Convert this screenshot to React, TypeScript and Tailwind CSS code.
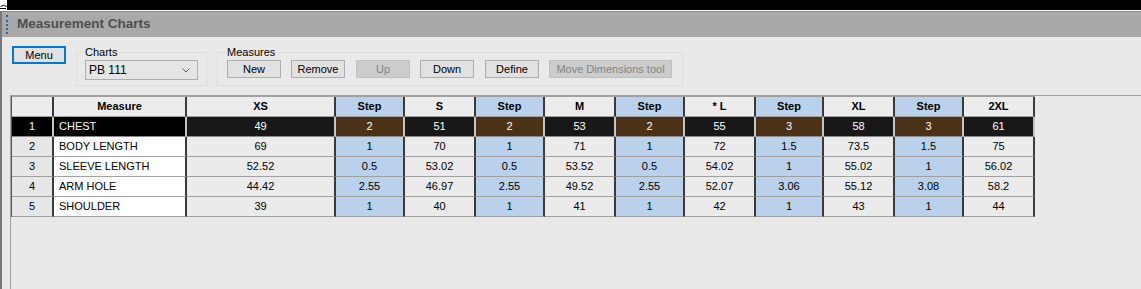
import React from "react";

type Col = { label: string; w: string; step?: boolean };

const cols: Col[] = [
  { label: "", w: "w-[42px]" },
  { label: "Measure", w: "w-[133px]" },
  { label: "XS", w: "w-[149px]" },
  { label: "Step", w: "w-[69px]", step: true },
  { label: "S", w: "w-[71px]" },
  { label: "Step", w: "w-[69px]", step: true },
  { label: "M", w: "w-[71px]" },
  { label: "Step", w: "w-[69px]", step: true },
  { label: "* L", w: "w-[71px]" },
  { label: "Step", w: "w-[68px]", step: true },
  { label: "XL", w: "w-[71px]" },
  { label: "Step", w: "w-[69px]", step: true },
  { label: "2XL", w: "w-[71px]" },
];

const rows: string[][] = [
  ["1", "CHEST", "49", "2", "51", "2", "53", "2", "55", "3", "58", "3", "61"],
  ["2", "BODY LENGTH", "69", "1", "70", "1", "71", "1", "72", "1.5", "73.5", "1.5", "75"],
  ["3", "SLEEVE LENGTH", "52.52", "0.5", "53.02", "0.5", "53.52", "0.5", "54.02", "1", "55.02", "1", "56.02"],
  ["4", "ARM HOLE", "44.42", "2.55", "46.97", "2.55", "49.52", "2.55", "52.07", "3.06", "55.12", "3.08", "58.2"],
  ["5", "SHOULDER", "39", "1", "40", "1", "41", "1", "42", "1", "43", "1", "44"],
];

const Button = ({ label, w = "w-[54px]", disabled = false, cls = "" }: { label: string; w?: string; disabled?: boolean; cls?: string }) => (
  <div
    className={`${w} ${cls} h-[18px] flex items-center justify-center border ${
      disabled ? "bg-[#cccccc] border-[#bfbfbf] text-[#838383]" : "bg-[#e1e1e1] border-[#adadad] text-black"
    }`}
  >
    {label}
  </div>
);

const Cell = ({ col, text, rowIdx, colIdx }: { col: Col; text: string; rowIdx: number; colIdx: number }) => {
  const sel = rowIdx === 0;
  let bg = "bg-[#ebebeb] text-black";
  if (sel) {
    if (colIdx < 2) bg = "bg-black text-white";
    else if (col.step) bg = "bg-[#4a3117] text-white";
    else bg = "bg-[#181818] text-white";
  } else if (colIdx === 1) bg = "bg-white text-black";
  else if (col.step) bg = "bg-[#b9d1ea] text-black";
  else if (colIdx === 0) bg = "bg-[#e6e6e6] text-black";
  return (
    <div
      className={`${col.w} ${bg} h-[20px] flex items-center border-b border-r-2 ${
        sel ? "border-r-[#c4c4c4] border-b-[#8a8a8a]" : "border-r-[#3a3a3a] border-b-[#a0a0a0]"
      } ${colIdx === 1 ? "justify-start pl-[5px]" : "justify-center"}`}
    >
      {text}
    </div>
  );
};

export default function App() {
  return (
    <div className="w-[1141px] h-[289px] overflow-hidden bg-[#e9e9e9] font-['Liberation_Sans',Arial,sans-serif] text-[11px] text-black">
      <div className="h-[10px] bg-black flex">
        <svg width="8" height="10" viewBox="0 0 8 10">
          <rect x="0" y="0" width="7" height="10" fill="#fff" />
          <path d="M0.5 6.5 Q3.5 4 6.5 6.5" stroke="#000" strokeWidth="1" fill="none" />
          <rect x="0" y="8" width="6" height="1" fill="#000" />
        </svg>
      </div>
      <div className="h-px bg-white" />
      <div className="flex flex-col h-[278px] border-l-2 border-l-[#7a7a7a]">
        <div className="h-[26px] bg-[#a9a9a9] flex items-center border-t border-t-[#8c8c8c]">
          <div className="ml-[4px] h-[19px] w-[2px] border-l-2 border-dotted border-l-[#2c5fb3]" />
          <span className="ml-[9px] text-[13.5px] font-bold text-[#4f4f4f]">Measurement Charts</span>
        </div>
        <div className="flex items-start gap-[10px] pl-[10px] pt-[9px]">
          <div className="w-[54px] h-[18px] flex items-center justify-center border-2 border-[#0078d7] bg-[#e1e1e1]">Menu</div>
          <fieldset className="border border-[#dcdcdc] pl-[8px] pr-[8px] pb-[5px] pt-[1px] w-[131px]">
            <legend className="px-0 leading-[13px]">Charts</legend>
            <div className="w-[113px] h-[20px] bg-[#e5e5e5] border border-[#adadad] flex items-center justify-between pl-[3px] pr-[7px]">
              <span className="text-[12px]">PB 111</span>
              <svg width="8" height="5" viewBox="0 0 8 5">
                <polyline points="0.5,0.5 4,4 7.5,0.5" fill="none" stroke="#606060" strokeWidth="1" />
              </svg>
            </div>
          </fieldset>
          <fieldset className="border border-[#dcdcdc] pl-[9px] pr-[9px] pb-[7px] pt-[1px] w-[466px]">
            <legend className="px-0 leading-[13px]">Measures</legend>
            <div className="flex gap-[10px]">
              <Button label="New" />
              <Button label="Remove" />
              <Button label="Up" disabled cls="ml-px" />
              <Button label="Down" />
              <Button label="Define" cls="ml-px" />
              <Button label="Move Dimensions tool" w="w-[123px]" disabled />
            </div>
          </fieldset>
        </div>
        <div className="flex-1 mt-[9px] ml-[8px] border-t border-l border-[#a0a0a0]">
          <div className="inline-flex flex-col border-l border-l-[#5a5a5a] border-t border-t-[#a0a0a0]">
            <div className="flex">
              {cols.map((c, i) => (
                <div
                  key={i}
                  className={`${c.w} h-[20px] flex items-center justify-center font-bold border-b border-b-[#a0a0a0] border-r-2 border-r-[#3a3a3a] ${
                    c.step ? "bg-[#b9d1ea]" : "bg-[#ececec]"
                  }`}
                >
                  {c.label}
                </div>
              ))}
            </div>
            {rows.map((r, ri) => (
              <div key={ri} className="flex">
                {r.map((t, ci) => (
                  <Cell key={ci} col={cols[ci]} text={t} rowIdx={ri} colIdx={ci} />
                ))}
              </div>
            ))}
          </div>
        </div>
      </div>
    </div>
  );
}
